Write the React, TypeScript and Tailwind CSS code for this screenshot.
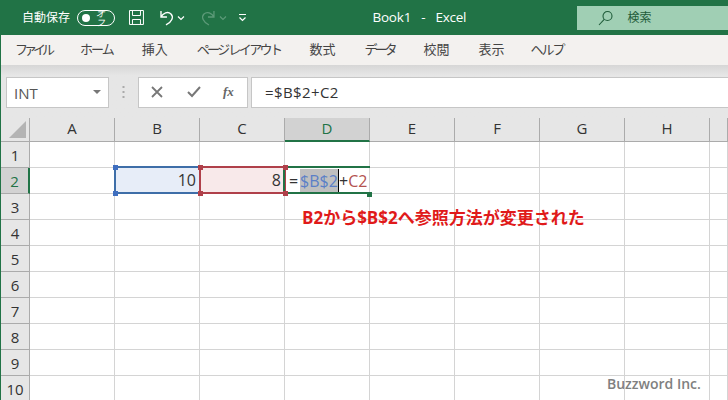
import { Fragment } from "react";

const jp = "font-['Open_Sans','Noto_Sans_CJK_JP',sans-serif]";
// カタカナは Meiryo UI 風に字詰めする
const tabs = [
  { label: "ファイル", cls: "tracking-[-4px]" },
  { label: "ホーム", cls: "tracking-[-2px]" },
  { label: "挿入", cls: "" },
  { label: "ページ レイアウト", cls: "tracking-[-2.6px]" },
  { label: "数式", cls: "" },
  { label: "データ", cls: "tracking-[-3px]" },
  { label: "校閲", cls: "" },
  { label: "表示", cls: "mr-[-3px]" },
  { label: "ヘルプ", cls: "tracking-[-2px]" },
];
const cols = ["A", "B", "C", "D", "E", "F", "G", "H", ""];
const rows = [1, 2, 3, 4, 5, 6, 7, 8, 9, 10];

function Cell({ col, row }: { col: string; row: number }) {
  // 2行目だけ値が入っている
  if (row === 2 && col === "B") {
    return <div className="bg-[#e7edf8] border-r border-b border-[#d4d4d4] text-right pr-[3px] text-[16px] leading-[25px] text-[#333]">10</div>;
  }
  if (row === 2 && col === "C") {
    return <div className="bg-[#f8e9ea] border-r border-b border-[#d4d4d4] text-right pr-[3px] text-[16px] leading-[25px] text-[#333]">8</div>;
  }
  if (row === 2 && col === "D") {
    return (
      <div className="border-r border-b border-[#d4d4d4] flex items-stretch pl-[4px] text-[16px] leading-[24px] pt-[1px] pb-[1px] text-[#333] whitespace-nowrap">
        <span className="w-[11px]">=</span>
        <span className="bg-[#bfbfbf] text-[#5b7fc7] border-r border-black w-[39px]">$B$2</span>
        <span>+</span>
        <span className="text-[#b4524f]">C2</span>
      </div>
    );
  }
  return <div className="border-r border-b border-[#d4d4d4]" />;
}

export default function App() {
  return (
    <div className={`relative w-[728px] h-[400px] overflow-hidden bg-white ${jp}`}>
      {/* タイトルバー */}
      <div className="h-[35px] bg-[#217346] flex items-center text-white">
        <span className="ml-[22px] text-[12px] w-[50px] whitespace-nowrap">自動保存</span>
        <div className="ml-[5px] w-[38px] h-[16px] rounded-full border border-white flex items-center pl-[4px] gap-[6px]">
          <div className="w-[8px] h-[8px] rounded-full bg-white" />
          <span className="text-[9px] leading-none italic">オフ</span>
        </div>
        <svg className="ml-[13px]" width="17" height="17" viewBox="0 0 17 17" fill="none" stroke="white" strokeWidth="1">
          <path d="M1.5 1.5h14v14h-14zM4.5 1.5v5h8v-5M4.5 15.5v-5h8v5" />
        </svg>
        <svg className="ml-[12px]" width="18" height="18" viewBox="0 0 18 18" fill="none" stroke="white" strokeWidth="1.4">
          <path d="M4 2v6h6M4 8c2-4 7-6 10-3 3 3 1 8-5 11" />
        </svg>
        <svg className="ml-[2px]" width="8" height="6" viewBox="0 0 8 6" fill="none" stroke="white" strokeWidth="1.2">
          <path d="M1 1.5l3 3 3-3" />
        </svg>
        <svg className="ml-[15px]" width="18" height="18" viewBox="0 0 18 18" fill="none" stroke="#5c9a78" strokeWidth="1.3">
          <path d="M14 2v6H8M14 8c-2-4-7-6-10-3-3 3-1 8 5 11" />
        </svg>
        <svg className="ml-[2px]" width="8" height="6" viewBox="0 0 8 6" fill="none" stroke="#5c9a78" strokeWidth="1.2">
          <path d="M1 1.5l3 3 3-3" />
        </svg>
        <svg className="ml-[11px]" width="9" height="9" viewBox="0 0 9 9" fill="none" stroke="white" strokeWidth="1.2">
          <path d="M1 1.5h7M1.5 4.5l3 3 3-3" />
        </svg>
        <div className="ml-[125px] w-[205px] text-[13.5px] flex gap-[10px]">
          <span className="tracking-[-0.2px]">Book1</span>
          <span>-</span>
          <span className="tracking-[-0.3px]">Excel</span>
        </div>
        <div className="h-[24px] w-[152px] bg-[#a0cfb4] flex items-center text-[#1f5c3a]">
          <svg className="ml-[21px]" width="16" height="16" viewBox="0 0 16 16" fill="none" stroke="#1f5c3a" strokeWidth="1.1">
            <circle cx="9.5" cy="6" r="4.5" />
            <path d="M6.2 9.4L1 15" />
          </svg>
          <span className="ml-[14px] text-[12px]">検索</span>
        </div>
      </div>

      <div className="border-l border-[#217346]">
        {/* リボンのタブ */}
        <div className="h-[30px] bg-[#f3f1ef] flex items-center pl-[14px] gap-[29px] text-[13px] text-[#444] whitespace-nowrap">
          {tabs.map((t) => (
            <span key={t.label} className={t.cls}>
              {t.label}
            </span>
          ))}
        </div>

        {/* 数式バー */}
        <div className="h-[53px] bg-gradient-to-b from-[#d6d6d6] to-[#e6e6e6] to-[20%] flex items-center pl-[5px] pt-[11px] pb-[10px]">
          <div className="w-[103px] h-[31px] bg-white border border-[#c6c6c6] flex items-center justify-between pl-[7px] pr-[7px] text-[15px] text-[#555]">
            <span className="pt-[2px]">INT</span>
            <div className="w-0 h-0 border-l-[4px] border-r-[4px] border-t-[4px] border-l-transparent border-r-transparent border-t-[#777]" />
          </div>
          <svg className="ml-[13px]" width="3" height="13" viewBox="0 0 3 13" fill="#aaa">
            <rect x="0.5" y="0" width="2" height="2" />
            <rect x="0.5" y="5" width="2" height="2" />
            <rect x="0.5" y="10" width="2" height="2" />
          </svg>
          <div className="ml-[13px] w-[110px] h-[31px] bg-white border border-[#c6c6c6] flex items-center pl-[12px] text-[#666]">
            <svg width="12" height="12" viewBox="0 0 12 12" fill="none" stroke="#777" strokeWidth="1.8">
              <path d="M1 1l10 10M11 1L1 11" />
            </svg>
            <svg className="ml-[24px]" width="14" height="12" viewBox="0 0 14 12" fill="none" stroke="#777" strokeWidth="2">
              <path d="M1 6l4 4 8-9" />
            </svg>
            <span className="ml-[22px] text-[13px] italic font-['Liberation_Serif',serif] font-bold text-[#666]">fx</span>
          </div>
          <div className="ml-[3px] flex-1 h-[31px] bg-white border-y border-l border-[#c6c6c6] flex items-center pl-[13px] text-[15px] tracking-[0.4px] text-[#333]">
            =$B$2+C2
          </div>
        </div>

        {/* シート */}
        <div className="relative font-['Open_Sans','Noto_Sans',sans-serif] grid grid-cols-[29px_repeat(8,85px)_18px] grid-rows-[24px_repeat(10,26px)]">
          <div className="bg-[#e6e6e6] border-r border-b border-[#ababab] flex items-end justify-end pr-[3px] pb-[3px]">
            <svg width="17" height="17" viewBox="0 0 17 17" fill="#b4b4b4">
              <path d="M17 0v17H0z" />
            </svg>
          </div>
          {cols.map((c) => (
            <div
              key={c}
              className={
                c === "D"
                  ? "bg-[#d2d2d2] border-r border-[#ababab] border-b-2 border-b-[#217346] text-center text-[15px] leading-[21px] text-[#217346]"
                  : "bg-[#e6e6e6] border-r border-b border-[#ababab] text-center text-[15px] leading-[21px] text-[#333]"
              }
            >
              {c}
            </div>
          ))}
          {rows.map((r) => (
            <Fragment key={r}>
              <div
                className={
                  r === 2
                    ? "bg-[#d2d2d2] border-r-2 border-r-[#217346] border-b border-[#ababab] text-center text-[15px] leading-[26px] text-[#217346]"
                    : "bg-[#e6e6e6] border-r border-b border-[#ababab] text-center text-[15px] leading-[26px] text-[#333]"
                }
              >
                {r}
              </div>
              {cols.map((c) => (
                <Cell key={c} col={c} row={r} />
              ))}
            </Fragment>
          ))}

          {/* 参照範囲の枠 */}
          <div className="absolute left-[113px] top-[48px] w-[87px] h-[28px] border-2 border-[#3e6ea8]" />
          <div className="absolute left-[198px] top-[48px] w-[87px] h-[28px] border-2 border-[#b0404a]" />
          <div className="absolute left-[282px] top-[48px] w-[87px] h-[28px] border-2 border-[#217346] border-r-0" />
          <div className="absolute left-[112px] top-[47px] w-[5px] h-[5px] bg-[#3e6ec0]" />
          <div className="absolute left-[112px] top-[73px] w-[5px] h-[5px] bg-[#3e6ec0]" />
          <div className="absolute left-[197px] top-[47px] w-[5px] h-[5px] bg-[#b0404a]" />
          <div className="absolute left-[197px] top-[73px] w-[5px] h-[5px] bg-[#b0404a]" />
          <div className="absolute left-[282px] top-[47px] w-[5px] h-[5px] bg-[#b0404a]" />
          <div className="absolute left-[282px] top-[73px] w-[5px] h-[5px] bg-[#b0404a]" />
          <div className="absolute left-[366px] top-[74px] w-[5px] h-[5px] bg-[#217346]" />
        </div>
      </div>

      {/* 注釈 */}
      <div className="absolute left-[302px] top-[205px] text-[17px] font-bold text-[#e01a1a] font-['Open_Sans','Noto_Sans_CJK_JP',sans-serif] whitespace-nowrap">
        B2から$B$2へ参照方法が変更された
      </div>
      <div className="absolute left-[607px] top-[373px] text-[14px] font-semibold text-[#808080] whitespace-nowrap">
        Buzzword Inc.
      </div>
    </div>
  );
}
